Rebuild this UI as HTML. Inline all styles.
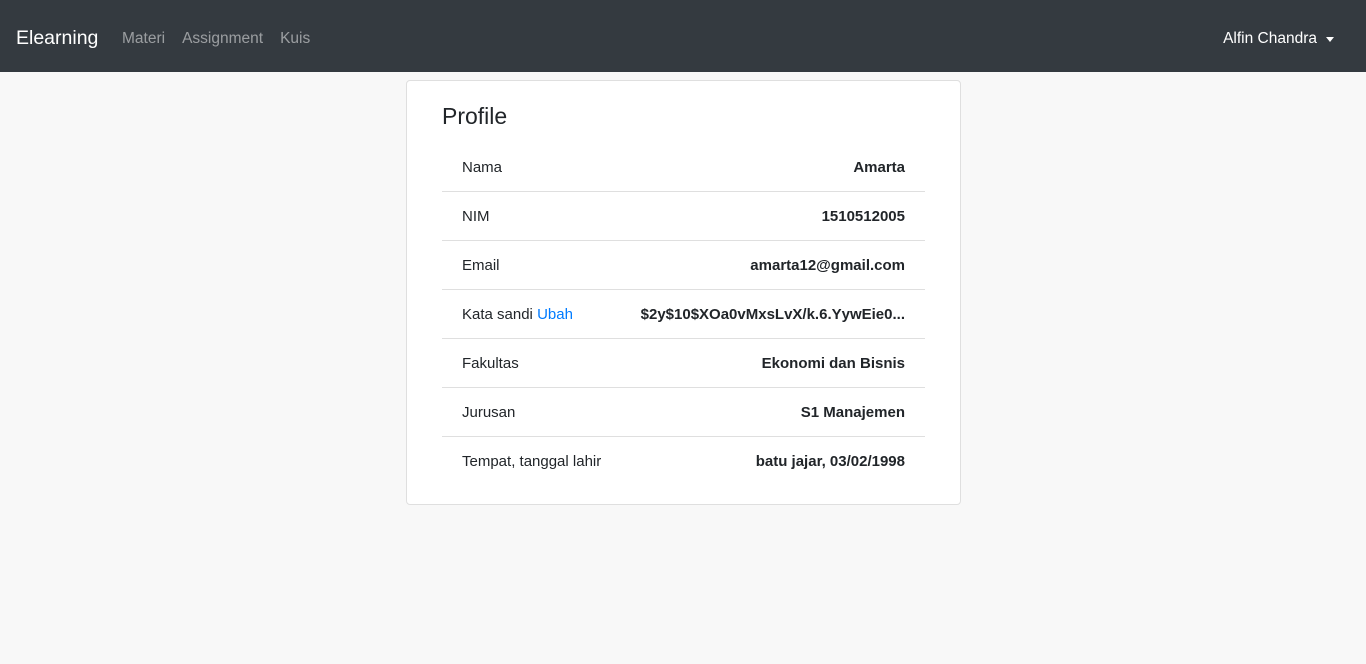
<!DOCTYPE html>
<html><head><meta charset="utf-8"><style>
*{box-sizing:border-box;margin:0;padding:0}
body{width:1366px;height:664px;background:#f8f8f8;font-family:"Liberation Sans",sans-serif;color:#212529;font-size:15px;overflow:hidden}
.nav{height:72px;background:#343a40;position:relative}
.brand{position:absolute;left:16px;top:27px;color:#fff;font-size:19.5px}
.links{position:absolute;left:122px;top:30px;color:rgba(255,255,255,.5);font-size:15.5px}
.links span{margin-right:17px}
.user{position:absolute;right:49px;top:30px;color:#fff;font-size:15.5px}
.user:after{content:"";position:absolute;right:-17px;top:7px;border-top:5px solid #fff;border-left:4px solid transparent;border-right:4px solid transparent}
.card{position:absolute;left:406px;top:80px;width:555px;height:425px;background:#fff;border:1px solid #dfdfdf;border-radius:4px}
h2{position:absolute;left:35px;top:22px;font-weight:400;font-size:23px}
.list{position:absolute;left:35px;top:62px;width:483px}
.row{height:49px;border-bottom:1px solid #dfdfdf;display:flex;justify-content:space-between;align-items:center;padding:0 20px}
.row:last-child{border-bottom:none}
.row b{font-weight:700}
a{color:#007bff;text-decoration:none}
</style></head><body>
<div class="nav"><div class="brand">Elearning</div><div class="links"><span>Materi</span><span>Assignment</span><span>Kuis</span></div><div class="user">Alfin Chandra</div></div>
<div class="card"><h2>Profile</h2><div class="list">
<div class="row"><span>Nama</span><b>Amarta</b></div>
<div class="row"><span>NIM</span><b>1510512005</b></div>
<div class="row"><span>Email</span><b>amarta12@gmail.com</b></div>
<div class="row"><span>Kata sandi <a>Ubah</a></span><b>$2y$10$XOa0vMxsLvX/k.6.YywEie0...</b></div>
<div class="row"><span>Fakultas</span><b>Ekonomi dan Bisnis</b></div>
<div class="row"><span>Jurusan</span><b>S1 Manajemen</b></div>
<div class="row"><span>Tempat, tanggal lahir</span><b>batu jajar, 03/02/1998</b></div>
</div></div>
</body></html>
